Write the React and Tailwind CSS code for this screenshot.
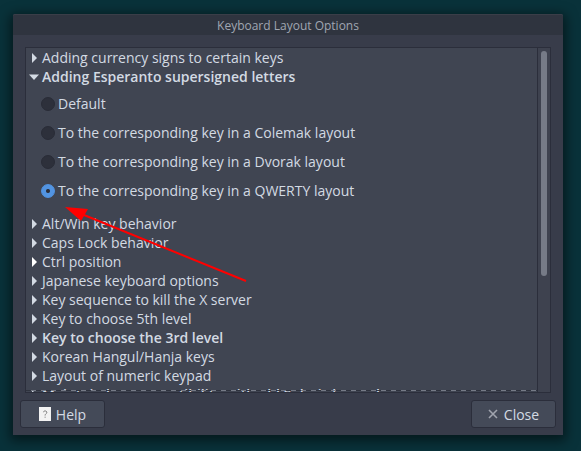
import { useState } from "react";

const before = [
  { label: "Adding currency signs to certain keys" },
];

const after = [
  { label: "Alt/Win key behavior" },
  { label: "Caps Lock behavior" },
  { label: "Ctrl position", hot: true },
  { label: "Japanese keyboard options" },
  { label: "Key sequence to kill the X server" },
  { label: "Key to choose 5th level" },
  { label: "Key to choose the 3rd level", bold: true },
  { label: "Korean Hangul/Hanja keys" },
  { label: "Layout of numeric keypad" },
  { label: "Maintain key compatibility with old Solaris keycodes", bold: true },
];

const choices = [
  "Default",
  "To the corresponding key in a Colemak layout",
  "To the corresponding key in a Dvorak layout",
  "To the corresponding key in a QWERTY layout",
];

function Row({ label, bold, hot, open }) {
  return (
    <button
      type="button"
      aria-expanded={!!open}
      className={`flex h-[19px] w-full shrink-0 items-center gap-[3px] whitespace-nowrap pl-[3px] text-left ${bold ? "font-semibold" : ""}`}
    >
      <svg
        viewBox="0 0 10 10"
        className={`h-[10px] w-[10px] shrink-0 ${hot ? "fill-white" : "fill-[#d3dae3]"}`}
        aria-hidden="true"
      >
        {open ? <path d="M0 2.5H10L5 8Z" /> : <path d="M3 0L8 5L3 10Z" />}
      </svg>
      <span>{label}</span>
    </button>
  );
}

export default function App() {
  const [choice, setChoice] = useState(choices[3]);
  return (
    <div className="flex h-screen bg-[#09323a] pt-[14px] pr-[18px] pb-4 pl-[13px] font-['Open_Sans','Noto_Sans',sans-serif] text-[14px] leading-[19px] text-[#d3dae3]">
      <main className="flex min-w-0 flex-1 flex-col rounded-t-[2px] bg-[#383c4a] shadow-[0_3px_12px_3px_rgba(0,0,0,0.5)]">
        <h1 className="h-[21px] shrink-0 rounded-t-[2px] border-t border-[#3a3e48] bg-[#2f343f] text-center text-[12px] leading-[22px] text-[#a0a6b2]">
          Keyboard Layout Options
        </h1>
        <section className="mx-3 mt-3 flex min-h-0 flex-1 border border-[#2b2e3b] bg-[#404552]">
          <div className="relative min-w-0 flex-1 overflow-hidden">
            {before.map((r) => (
              <Row key={r.label} {...r} />
            ))}
            <Row label="Adding Esperanto supersigned letters" bold open />
            <fieldset className="pt-[3px] pb-[9px] pl-[15px]">
              {choices.map((c) => (
                <label key={c} className="flex h-[29px] items-center gap-[3px] whitespace-nowrap">
                  <input
                    type="radio"
                    name="esperanto"
                    checked={choice === c}
                    onChange={() => setChoice(c)}
                    className="h-[14px] w-[14px] shrink-0 appearance-none rounded-full border border-[#292c37] bg-[#2d303b] checked:border-[#5294e2] checked:bg-[radial-gradient(circle,#2b2e39_0_1.5px,#5294e2_2.5px)]"
                  />
                  <span>{c}</span>
                </label>
              ))}
            </fieldset>
            {after.map((r) => (
              <Row key={r.label} {...r} />
            ))}
            <div className="absolute inset-x-0 bottom-px h-px bg-[repeating-linear-gradient(90deg,#2f333e_0_5px,#767b87_5px_10px)]" />
            <svg
              viewBox="0 0 184 78"
              className="absolute top-[158px] left-[38px] h-[78px] w-[184px]"
              aria-hidden="true"
            >
              <path d="M20 9L182 75" stroke="#f00" strokeWidth="2" />
              <path d="M1 1L24 3L17 15Z" fill="#f00" />
            </svg>
          </div>
          <div className="flex w-[13px] shrink-0 flex-col items-center border-l border-[#2b2e3b] bg-[#3e424f] pt-[3px]">
            <div className="h-[66%] w-[6px] rounded-full bg-[#767b87]" />
          </div>
        </section>
        <footer className="flex shrink-0 justify-between px-[7px] pt-[7px] pb-[7px]">
          <button
            type="button"
            className="flex h-7 w-[85px] items-center justify-center gap-[5px] rounded-[3px] border border-[#2b2e3b] bg-[#444a58]"
          >
            <svg viewBox="0 0 12 14" className="h-[14px] w-3" aria-hidden="true">
              <path d="M0 0H12V14H0Z" fill="#f2f2f2" />
              <path d="M4.5 5.2C4.5 3.5 7.8 3.5 7.8 5.4C7.8 6.8 6.1 6.7 6.1 8.5M6.1 9.7V10.7" fill="none" stroke="#777" />
            </svg>
            Help
          </button>
          <button
            type="button"
            className="flex h-7 w-[85px] items-center justify-center gap-[6px] rounded-[3px] border border-[#2b2e3b] bg-[#444a58]"
          >
            <svg viewBox="0 0 10 10" className="h-[10px] w-[10px]" aria-hidden="true">
              <path d="M1 1L9 9M9 1L1 9" stroke="#a0a4ae" strokeWidth="1.6" />
            </svg>
            Close
          </button>
        </footer>
      </main>
    </div>
  );
}
